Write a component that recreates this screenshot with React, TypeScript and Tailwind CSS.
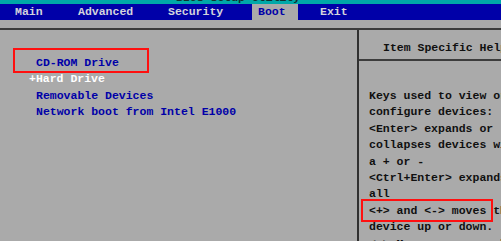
import React from "react";

export default function App() {
  const mono = { fontFamily: '"Liberation Mono", "DejaVu Sans Mono", monospace' };
  const helpLines = [
    "Keys used to view or",
    "configure devices:",
    "<Enter> expands or",
    "collapses devices with",
    "a + or -",
    "<Ctrl+Enter> expands",
    "all",
    "<+> and <-> moves the",
    "device up or down.",
    "<n> May move removable",
  ];
  return (
    <div
      className="relative w-[501px] h-[241px] overflow-hidden bg-[#aaaaaa] font-bold text-[11.5px] leading-[16.4px]"
      style={mono}
    >
      {/* title strip */}
      <div className="h-[4px] bg-[#00a8a8] overflow-hidden">
        <div className="pl-[176px] mt-[-9px] text-[#103030] whitespace-nowrap leading-[14px]">
          BIOS Setup Utility
        </div>
      </div>
      {/* menu bar */}
      <div className="h-[16px] bg-[#0000a8] flex items-center pl-[15px] text-[#d4d4dc] whitespace-nowrap">
        <div className="w-[63px]">Main</div>
        <div className="w-[90px]">Advanced</div>
        <div className="w-[84px]">Security</div>
        <div className="w-[46px] h-full bg-[#aaaaaa] text-[#0000a8] pl-[6px] flex items-center">Boot</div>
        <div className="ml-[22px]">Exit</div>
      </div>
      <div className="h-[8px]" />
      <div className="h-[2px] bg-[#3c3c3c]" />
      {/* content */}
      <div className="flex h-[211px]">
        <div className="w-[357px] pt-[25px] text-[#0000a8] whitespace-nowrap">
          <div className="pl-[36px]">CD-ROM Drive</div>
          <div className="pl-[29px] text-white">+Hard Drive</div>
          <div className="pl-[36px]">Removable Devices</div>
          <div className="pl-[36px]">Network boot from Intel E1000</div>
        </div>
        <div className="w-[2px] bg-[#303030]" />
        <div className="flex-1 overflow-hidden text-[#101010] whitespace-nowrap">
          <div className="h-[31px] pt-[10px] pl-[24px] border-b-2 border-[#3c3c3c]">
            Item Specific Help
          </div>
          <div className="pt-[27px] pl-[10px]">
            {helpLines.map((l) => (
              <div key={l}>{l}</div>
            ))}
          </div>
        </div>
      </div>
      {/* red highlight boxes */}
      <div className="absolute left-[13px] top-[48px] w-[136px] h-[25px] border-2 border-[#ff1010]" />
      <div className="absolute left-[361px] top-[199px] w-[132px] h-[23px] border-2 border-[#ff1010]" />
    </div>
  );
}
